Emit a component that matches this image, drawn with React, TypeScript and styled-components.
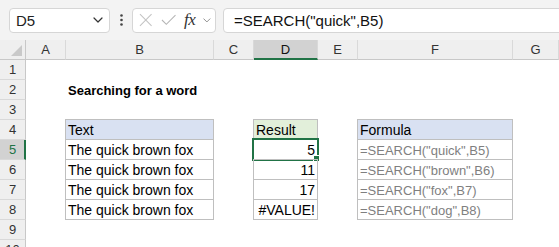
import React from 'react'
import styled, { createGlobalStyle, css } from 'styled-components'

const GlobalStyle = createGlobalStyle`
  html, body {
    margin: 0;
    padding: 0;
    background: #fff;
    overflow: hidden;
  }
  body {
    font-family: 'Liberation Sans', Arial, sans-serif;
    color: #000;
  }
`

const Page = styled.div`
  width: 559px;
  height: 247px;
  overflow: hidden;
`

/* ---------- formula bar ---------- */

const Toolbar = styled.div`
  display: flex;
  align-items: center;
  height: 40px;
  padding-left: 9px;
  background: #f3f3f3;
  box-sizing: border-box;
`

const Box = styled.div`
  display: flex;
  align-items: center;
  height: 25px;
  box-sizing: border-box;
  background: #fff;
  border: 1px solid #d6d6d6;
  border-radius: 4px;
`

const NameBox = styled(Box)`
  width: 101px;
  padding: 0 6px 0 6px;
  justify-content: space-between;
  font-size: 15px;
  color: #222;
`

const Dots = styled.div`
  width: 22px;
  display: flex;
  justify-content: center;
`

const FxBox = styled(Box)`
  width: 84px;
  padding: 0 4px 0 6px;
  gap: 8px;
`

const Fx = styled.span`
  font-family: 'Liberation Serif', 'DejaVu Serif', serif;
  font-style: italic;
  font-size: 17px;
  color: #333;
  margin-left: 0;
  letter-spacing: -0.5px;
`

const FormulaInput = styled(Box)`
  flex: 1;
  margin-left: 7px;
  margin-right: -6px;
  padding-left: 10px;
  font-size: 15px;
  color: #111;
`

const Chevron = ({ size = 10, color = '#444' }: { size?: number; color?: string }) => (
  <svg width={size} height={size * 0.6} viewBox="0 0 10 6" fill="none">
    <path d="M1 1l4 4 4-4" stroke={color} strokeWidth="1.2" strokeLinecap="round" strokeLinejoin="round" />
  </svg>
)

/* ---------- sheet ---------- */

const Sheet = styled.div`
  display: grid;
  grid-template-columns: 26px 40px 148px 40px 64px 40px 155px 1fr;
  grid-auto-rows: 20px;
`

const Corner = styled.div`
  position: relative;
  background: #efefef;
  border-right: 1px solid #c8c8c8;
  border-bottom: 1px solid #c8c8c8;
  box-sizing: border-box;
`

const CornerMark = styled.svg`
  position: absolute;
  right: 3px;
  bottom: 3px;
`

const ColHead = styled.div<{ $selected?: boolean }>`
  box-sizing: border-box;
  background: ${(p) => (p.$selected ? '#d2d2d2' : '#efefef')};
  border-right: 1px solid #d9d9d9;
  border-bottom: 1px solid #c8c8c8;
  font-size: 13px;
  line-height: 19px;
  text-align: center;
  color: #333;
  ${(p) =>
    p.$selected &&
    css`
      border-bottom: 2px solid #217346;
      color: #111;
    `}
`

const RowHead = styled.div<{ $selected?: boolean }>`
  box-sizing: border-box;
  background: ${(p) => (p.$selected ? '#d2d2d2' : '#efefef')};
  border-right: 1px solid #c8c8c8;
  border-bottom: 1px solid #d9d9d9;
  font-size: 13px;
  line-height: 20px;
  text-align: center;
  color: #333;
  ${(p) =>
    p.$selected &&
    css`
      border-right: 2px solid #217346;
      padding-left: 1px;
      color: #217346;
    `}
`

const Cell = styled.div<{
  $boxed?: boolean
  $fill?: string
  $align?: 'left' | 'right'
  $muted?: boolean
  $bold?: boolean
}>`
  position: relative;
  box-sizing: border-box;
  padding: 0 2px 0 2px;
  font-size: ${(p) => (p.$muted ? '13px' : p.$bold ? '13px' : '14px')};
  font-weight: ${(p) => (p.$bold ? 700 : 400)};
  line-height: 21px;
  white-space: nowrap;
  text-align: ${(p) => p.$align ?? 'left'};
  color: ${(p) => (p.$muted ? '#7f7f7f' : '#000')};
  background: ${(p) => p.$fill ?? 'transparent'};
  ${(p) =>
    p.$boxed &&
    css`
      border-right: 1px solid #bfbfbf;
      border-bottom: 1px solid #bfbfbf;
      box-shadow: -1px 0 0 0 #bfbfbf, 0 -1px 0 0 #bfbfbf, -1px -1px 0 0 #bfbfbf;
    `}
`

const Selection = styled.div`
  position: absolute;
  left: -2px;
  top: -2px;
  width: 67px;
  height: 23px;
  box-sizing: border-box;
  border: 2px solid #217346;
  pointer-events: none;
`

const Handle = styled.div`
  position: absolute;
  right: -3px;
  bottom: -3px;
  width: 5px;
  height: 5px;
  background: #217346;
  border: 1px solid #fff;
`

type Spec = {
  text?: string
  boxed?: boolean
  fill?: string
  align?: 'left' | 'right'
  muted?: boolean
  bold?: boolean
  selected?: boolean
}

const BLUE = '#d9e1f2'
const GREEN = '#e2efda'

const columns = ['A', 'B', 'C', 'D', 'E', 'F', 'G']

const fox = 'The quick brown fox'
const data: { result: string; formula: string }[] = [
  { result: '5', formula: '=SEARCH("quick",B5)' },
  { result: '11', formula: '=SEARCH("brown",B6)' },
  { result: '17', formula: '=SEARCH("fox",B7)' },
  { result: '#VALUE!', formula: '=SEARCH("dog",B8)' },
]

const rows: Record<number, Record<string, Spec>> = {
  2: { B: { text: 'Searching for a word', bold: true } },
  4: {
    B: { text: 'Text', boxed: true, fill: BLUE },
    D: { text: 'Result', boxed: true, fill: GREEN },
    F: { text: 'Formula', boxed: true, fill: BLUE },
  },
}

data.forEach((d, i) => {
  rows[5 + i] = {
    B: { text: fox, boxed: true },
    D: { text: d.result, boxed: true, align: 'right', selected: i === 0 },
    F: { text: d.formula, boxed: true, muted: true },
  }
})

export default function App() {
  return (
    <Page>
      <GlobalStyle />
      <Toolbar>
        <NameBox>
          <span>D5</span>
          <Chevron size={10} color="#333" />
        </NameBox>
        <Dots>
          <svg width="3" height="12" viewBox="0 0 3 12">
            <circle cx="1.5" cy="1.5" r="1.3" fill="#444" />
            <circle cx="1.5" cy="6" r="1.3" fill="#444" />
            <circle cx="1.5" cy="10.5" r="1.3" fill="#444" />
          </svg>
        </Dots>
        <FxBox>
          <svg width="14" height="14" viewBox="0 0 14 14">
            <path d="M1 1l12 12M13 1L1 13" stroke="#c4c4c4" strokeWidth="1.1" />
          </svg>
          <svg width="16" height="12" viewBox="0 0 16 12">
            <path d="M1 6l4.5 4.5L15 1" stroke="#b5b5b5" strokeWidth="1.1" fill="none" />
          </svg>
          <Fx>fx</Fx>
          <Chevron size={8} color="#888" />
        </FxBox>
        <FormulaInput>=SEARCH("quick",B5)</FormulaInput>
      </Toolbar>

      <Sheet>
        <Corner>
          <CornerMark width="11" height="11" viewBox="0 0 11 11">
            <path d="M11 0V11H0Z" fill="#c9c9c9" />
          </CornerMark>
        </Corner>
        {columns.map((c) => (
          <ColHead key={c} $selected={c === 'D'}>
            {c}
          </ColHead>
        ))}
        {Array.from({ length: 10 }, (_, i) => i + 1).map((r) => (
          <React.Fragment key={r}>
            <RowHead $selected={r === 5}>{r}</RowHead>
            {columns.map((c) => {
              const s = rows[r]?.[c]
              return (
                <Cell
                  key={c}
                  $boxed={s?.boxed}
                  $fill={s?.fill}
                  $align={s?.align}
                  $muted={s?.muted}
                  $bold={s?.bold}
                >
                  {s?.text}
                  {s?.selected && (
                    <Selection>
                      <Handle />
                    </Selection>
                  )}
                </Cell>
              )
            })}
          </React.Fragment>
        ))}
      </Sheet>
    </Page>
  )
}
